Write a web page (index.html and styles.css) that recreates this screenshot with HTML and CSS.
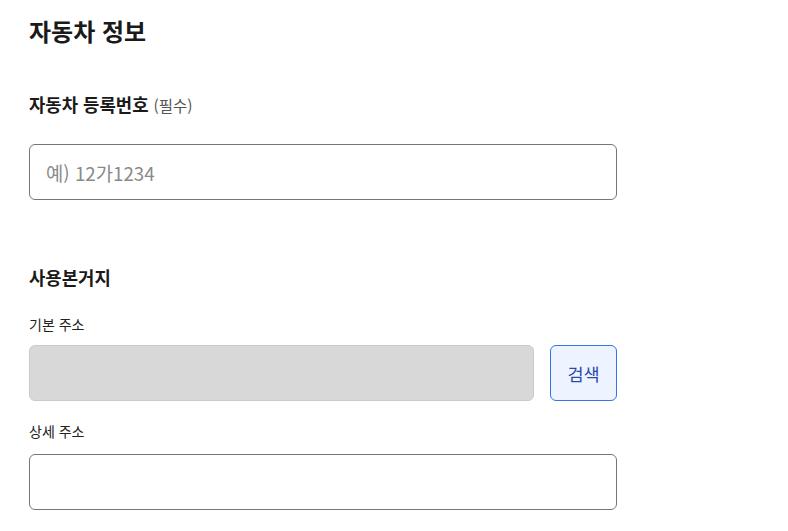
FILE: index.html
```html
<!DOCTYPE html>
<html lang="ko">
<head>
<meta charset="utf-8">
<link rel="stylesheet" href="styles.css">
</head>
<body>
<main class="page">
  <h1 class="title">자동차 정보</h1>

  <section class="field-group first">
    <label class="label-strong" for="carno">자동차 등록번호 <span class="req">(필수)</span></label>
    <input id="carno" class="input" type="text" placeholder="예) 12가1234">
  </section>

  <section class="field-group second">
    <h2 class="section-title">사용본거지</h2>
    <div class="sub-label">기본 주소</div>
    <div class="row">
      <input class="input disabled" type="text" disabled>
      <button class="btn-search" type="button">검색</button>
    </div>
    <div class="sub-label detail">상세 주소</div>
    <input class="input" type="text">
  </section>
</main>
</body>
</html>
```

FILE: styles.css
```css
* { box-sizing: border-box; }
html, body { margin: 0; padding: 0; background: #fff; }
body {
  font-family: "Noto Sans CJK KR", "Noto Sans", sans-serif;
  color: #1a1a1a;
}
.page {
  width: 617px;
  padding: 14px 0 0 29px;
}
.title {
  margin: 0;
  font-size: 24px;
  line-height: 34px;
  font-weight: 700;
  color: #1a1a1a;
}
.field-group.first { margin-top: 44px; }
.label-strong {
  display: block;
  font-size: 17.8px;
  line-height: 24px;
  font-weight: 700;
  color: #1a1a1a;
}
.req {
  font-size: 15.5px;
  font-weight: 400;
  color: #555;
}
.input {
  display: block;
  width: 100%;
  height: 56px;
  margin: 0;
  padding: 0 16px;
  border: 1px solid #767676;
  border-radius: 6px;
  font-family: inherit;
  font-size: 18.8px;
  color: #1a1a1a;
  background: #fff;
  outline: none;
}
.field-group.first .input { margin-top: 27px; }
.input::placeholder { color: #8a8a8a; }
.input.disabled {
  flex: 1;
  background: #d8d8d8;
  border-color: #cacaca;
}
.field-group.second { margin-top: 64px; }
.section-title {
  margin: 0;
  font-size: 17.8px;
  line-height: 26px;
  font-weight: 700;
  color: #1a1a1a;
}
.sub-label {
  margin-top: 24px;
  font-size: 14px;
  line-height: 20px;
  color: #222;
}
.sub-label.detail { margin-top: 20px; }
.row {
  display: flex;
  gap: 16px;
  margin-top: 11px;
}
.sub-label.detail + .input { margin-top: 13px; }
.btn-search {
  flex: none;
  width: 67px;
  height: 56px;
  border: 1px solid #3274ec;
  border-radius: 6px;
  background: #eef4ff;
  color: #2b48a8;
  font-family: inherit;
  font-size: 17.5px;
  padding: 0;
}
```
